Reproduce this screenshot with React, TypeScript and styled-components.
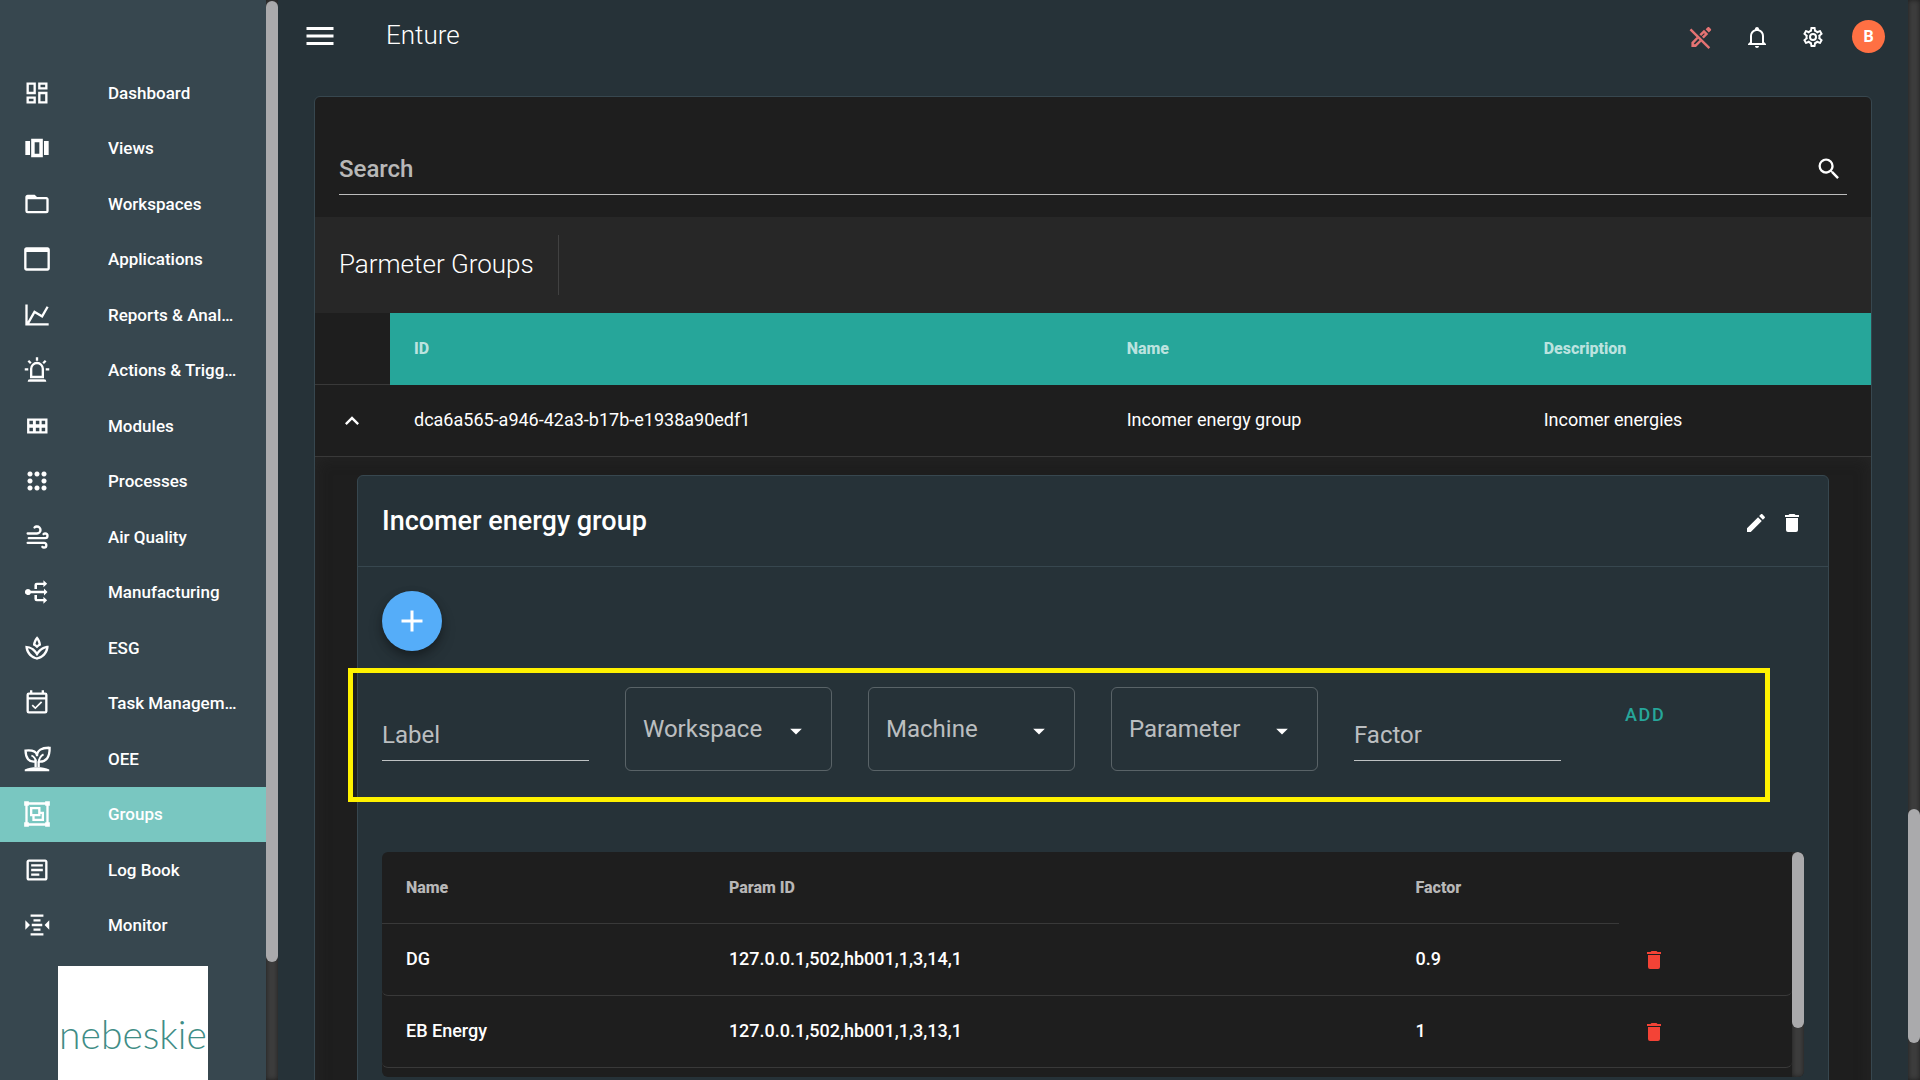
import React from "react";
import styled, { createGlobalStyle } from "styled-components";
import { MdOutlineSpa } from "react-icons/md";

const color = {
  page: "#263238",
  side: "#37474f",
  panel: "#1e1e1e",
  bar: "#272727",
  line: "#37474f",
  rule: "rgba(255, 255, 255, 0.12)",
  muted: "rgba(255, 255, 255, 0.7)",
  teal: "#26a69a",
};

const GlobalStyle = createGlobalStyle`
  *, *::before, *::after { box-sizing: border-box; }
  body {
    margin: 0;
    background: ${color.page};
    color: #fff;
    font-family: Roboto, "Liberation Sans", sans-serif;
    font-size: 18px;
  }
  button, input, select { font: inherit; color: inherit; }
  button { border: 0; padding: 0; background: none; cursor: pointer; }
`;

const paths = {
  dashboard: "M19,5V7H15V5H19M9,5V11H5V5H9M19,13V19H15V13H19M9,17V19H5V17H9M21,3H13V9H21V3M11,3H3V13H11V3M21,11H13V21H21V11M11,15H3V21H11V15Z",
  views: "M18,6V18H22V6M2,18H6V6H2M7,20H17V4H7M10,7H14V17H10V7Z",
  folder: "M20,18H4V8H20M20,6H12L10,4H4C2.89,4 2,4.89 2,6V18A2,2 0 0,0 4,20H20A2,2 0 0,0 22,18V8C22,6.89 21.1,6 20,6Z",
  application: "M21 2H3C1.9 2 1 2.9 1 4V20C1 21.1 1.9 22 3 22H21C22.1 22 23 21.1 23 20V4C23 2.9 22.1 2 21 2M21 20H3V6H21V20Z",
  chart: "M16,11.78L20.24,4.45L21.97,5.45L16.74,14.5L10.23,10.75L5.46,19H22V21H2V3H4V17.54L9.5,8L16,11.78Z",
  alarm: "M6,6.9L3.87,4.78L5.28,3.37L7.4,5.5L6,6.9M13,1V4H11V1H13M20.13,4.78L18,6.9L16.6,5.5L18.72,3.37L20.13,4.78M4.5,10.5V12.5H1.5V10.5H4.5M19.5,10.5H22.5V12.5H19.5V10.5M6,20H18A2,2 0 0,1 20,22H4A2,2 0 0,1 6,20M12,5A6,6 0 0,1 18,11V19H6V11A6,6 0 0,1 12,5M12,7A4,4 0 0,0 8,11V17H16V11A4,4 0 0,0 12,7Z",
  modules: "M3.5,5.5V18.5H21V5.5H3.5M14,7.5V10.5H11V7.5H14M5.5,7.5H8.5V10.5H5.5V7.5M5.5,16.5V13.5H8.5V16.5H5.5M11,16.5V13.5H14V16.5H11M19,16.5H16V13.5H19V16.5M16,10.5V7.5H19V10.5H16Z",
  processes: "M6,3.8a2.2,2.2 0 1,0 .01,0M12,3.8a2.2,2.2 0 1,0 .01,0M18,3.8a2.2,2.2 0 1,0 .01,0M6,9.8a2.2,2.2 0 1,0 .01,0M18,9.8a2.2,2.2 0 1,0 .01,0M6,15.8a2.2,2.2 0 1,0 .01,0M12,15.8a2.2,2.2 0 1,0 .01,0M18,15.8a2.2,2.2 0 1,0 .01,0",
  wind: "M4,10A1,1 0 0,1 3,9A1,1 0 0,1 4,8H12A2,2 0 0,0 14,6A2,2 0 0,0 12,4C11.45,4 10.95,4.22 10.59,4.59C10.2,5 9.56,5 9.17,4.59C8.78,4.2 8.78,3.56 9.17,3.17C9.9,2.45 10.9,2 12,2A4,4 0 0,1 16,6A4,4 0 0,1 12,10H4M19,12A1,1 0 0,0 20,11A1,1 0 0,0 19,10C18.72,10 18.47,10.11 18.29,10.29C17.9,10.68 17.27,10.68 16.88,10.29C16.5,9.9 16.5,9.27 16.88,8.88C17.42,8.34 18.17,8 19,8A3,3 0 0,1 22,11A3,3 0 0,1 19,14H5A1,1 0 0,1 4,13A1,1 0 0,1 5,12H19M18,18H4A1,1 0 0,1 3,17A1,1 0 0,1 4,16H18A3,3 0 0,1 21,19A3,3 0 0,1 18,22C17.17,22 16.42,21.66 15.88,21.12C15.5,20.73 15.5,20.1 15.88,19.71C16.27,19.32 16.9,19.32 17.29,19.71C17.47,19.89 17.72,20 18,20A1,1 0 0,0 19,19A1,1 0 0,0 18,18Z",
  manufacturing: "M4.3,9.4A2.6,2.6 0 0,1 6.7,11H18V9L21,12L18,15V13H6.7A2.6,2.6 0 1,1 4.3,9.4M9.8,9.5V6A2,2 0 0,1 11.8,4H17.5V2L20.7,5L17.5,8V6H12V9.5H9.8M9.8,14.5H12V18H17.5V16L20.7,19L17.5,22V20H11.8A2,2 0 0,1 9.8,18V14.5Z",
  calendar: "M19,3H18V1H16V3H8V1H6V3H5A2,2 0 0,0 3,5V19A2,2 0 0,0 5,21H19A2,2 0 0,0 21,19V5A2,2 0 0,0 19,3M19,19H5V9H19V19M5,7V5H19V7H5M10.56,17.46L16.5,11.53L15.43,10.47L10.56,15.34L8.45,13.23L7.39,14.29L10.56,17.46Z",
  group: "M8,8V12H13V8H8M1,1H5V2H19V1H23V5H22V19H23V23H19V22H5V23H1V19H2V5H1V1M5,19V20H19V19H20V5H19V4H5V5H4V19H5M6,6H15V10H18V18H8V14H6V6M15,14H10V16H16V12H15V14Z",
  log: "M5,3C3.89,3 3,3.89 3,5V19C3,20.11 3.89,21 5,21H19C20.11,21 21,20.11 21,19V5C21,3.89 20.11,3 19,3H5M5,5H19V19H5V5M7,7V9H17V7H7M7,11V13H17V11H7M7,15V17H14V15H7Z",
  monitor: "M2,8V16L6,12L2,8M22.5,8V16L18.5,12L22.5,8M6.5,3H17.5V5H6.5V3M9,7H15V9H9V7M7.5,11H16.5V13H7.5V11M9,15H15V17H9V15M6.5,19H17.5V21H6.5V19Z",
  bell: "M10 21H14C14 22.1 13.1 23 12 23S10 22.1 10 21M21 19V20H3V19L5 17V11C5 7.9 7 5.2 10 4.3V4C10 2.9 10.9 2 12 2S14 2.9 14 4V4.3C17 5.2 19 7.9 19 11V17L21 19M17 11C17 8.2 14.8 6 12 6S7 8.2 7 11V18H17V11Z",
  cog: "M12,8A4,4 0 0,1 16,12A4,4 0 0,1 12,16A4,4 0 0,1 8,12A4,4 0 0,1 12,8M12,10A2,2 0 0,0 10,12A2,2 0 0,0 12,14A2,2 0 0,0 14,12A2,2 0 0,0 12,10M10,22C9.75,22 9.54,21.82 9.5,21.58L9.13,18.93C8.5,18.68 7.96,18.34 7.44,17.94L4.95,18.95C4.73,19.03 4.46,18.95 4.34,18.73L2.34,15.27C2.21,15.05 2.27,14.78 2.46,14.63L4.57,12.97L4.5,12L4.57,11L2.46,9.37C2.27,9.22 2.21,8.95 2.34,8.73L4.34,5.27C4.46,5.05 4.73,4.96 4.95,5.05L7.44,6.05C7.96,5.66 8.5,5.32 9.13,5.07L9.5,2.42C9.54,2.18 9.75,2 10,2H14C14.25,2 14.46,2.18 14.5,2.42L14.87,5.07C15.5,5.32 16.04,5.66 16.56,6.05L19.05,5.05C19.27,4.96 19.54,5.05 19.66,5.27L21.66,8.73C21.79,8.95 21.73,9.22 21.54,9.37L19.43,11L19.5,12L19.43,13L21.54,14.63C21.73,14.78 21.79,15.05 21.66,15.27L19.66,18.73C19.54,18.95 19.27,19.04 19.05,18.95L16.56,17.95C16.04,18.34 15.5,18.68 14.87,18.93L14.5,21.58C14.46,21.82 14.25,22 14,22H10M11.25,4L10.88,6.61C9.68,6.86 8.62,7.5 7.85,8.39L5.44,7.35L4.69,8.65L6.8,10.2C6.4,11.37 6.4,12.64 6.8,13.8L4.68,15.36L5.43,16.66L7.86,15.62C8.63,16.5 9.68,17.14 10.87,17.38L11.24,20H12.76L13.13,17.39C14.32,17.14 15.37,16.5 16.14,15.62L18.57,16.66L19.32,15.36L17.2,13.81C17.6,12.64 17.6,11.37 17.2,10.2L19.31,8.65L18.56,7.35L16.15,8.39C15.38,7.5 14.32,6.86 13.12,6.62L12.75,4H11.25Z",
  magnify: "M9.5,3A6.5,6.5 0 0,1 16,9.5C16,11.11 15.41,12.59 14.44,13.73L14.71,14H15.5L20.5,19L19,20.5L14,15.5V14.71L13.73,14.44C12.59,15.41 11.11,16 9.5,16A6.5,6.5 0 0,1 3,9.5A6.5,6.5 0 0,1 9.5,3M9.5,5C7,5 5,7 5,9.5C5,12 7,14 9.5,14C12,14 14,12 14,9.5C14,7 12,5 9.5,5Z",
  pencil: "M20.71,7.04C21.1,6.65 21.1,6 20.71,5.63L18.37,3.29C18,2.9 17.35,2.9 16.96,3.29L15.12,5.12L18.87,8.87M3,17.25V21H6.75L17.81,9.93L14.06,6.18L3,17.25Z",
  trash: "M19,4H15.5L14.5,3H9.5L8.5,4H5V6H19M6,19A2,2 0 0,0 8,21H16A2,2 0 0,0 18,19V7H6V19Z",
  plus: "M19,13H13V19H11V13H5V11H11V5H13V11H19V13Z",
  chevronUp: "M7.41,15.41L12,10.83L16.59,15.41L18,14L12,8L6,14L7.41,15.41Z",
  menuDown: "M7,10L12,15L17,10H7Z",
  menu: "M3,6H21V8H3V6M3,11H21V13H3V11M3,16H21V18H3V16Z",
};

type IconName = keyof typeof paths;

const Svg = styled.svg<{ $size: number }>`
  display: block;
  flex: none;
  width: ${(p) => p.$size}px;
  height: ${(p) => p.$size}px;
  fill: currentColor;
`;

const Icon = ({ name, size = 24 }: { name: IconName; size?: number }) => (
  <Svg $size={size} viewBox="0 0 24 24" aria-hidden="true">
    <path d={paths[name]} />
  </Svg>
);

const SproutIcon = () => (
  <Svg $size={28} viewBox="0 0 24 24" aria-hidden="true">
    <path d="M1.5,22.5V21C4,19.4 8,19 12,19S20,19.4 22.5,21V22.5Z" />
    <g fill="none" stroke="currentColor" strokeWidth="2">
      <path d="M10.8,19V12.5M13.4,19V14" />
      <path d="M10.4,14.2C5.2,15 2.2,11.2 2.2,4.8C7,4.3 11,4.8 12,8.6" />
      <path d="M13.6,14.2C19.8,14.6 23,10.6 22.8,2.4C16,2.2 12,4.4 12,9.6" />
      <path d="M10.8,13.5C10.6,11.6 9.4,10 7.2,9M13.4,15C13.6,12 14.8,9.6 17.6,8" strokeWidth="1.6" />
    </g>
  </Svg>
);

const PencilOffIcon = () => (
  <Svg $size={24} viewBox="0 0 24 24" aria-hidden="true">
    <path d="M21.9,5.4C22.3,5 22.3,4.3 21.9,3.9L20.2,2.2C19.8,1.8 19.1,1.8 18.7,2.2L16.6,4.3L19.8,7.5Z" />
    <path d="M2.4,17.2V22H7L12.4,16.6L10.7,14.9L5.9,19.6L4.8,18.4L9.4,13.6L7.7,11.9Z" />
    <path d="M10.4,9.3L15,4.8L19.2,9L14.7,13.6L12.9,11.8L15.8,9L15,8.2L12.2,11.1Z" />
    <path d="M.6,5.2L2.3,3.5L21.2,22.3L19.5,24Z" />
  </Svg>
);

const Shell = styled.div`
  display: flex;
  height: 100vh;
  overflow: hidden;
`;

const Sidebar = styled.aside`
  flex: none;
  width: 266px;
  padding-top: 65px;
  overflow: hidden;
  background: ${color.side};
`;

const NavList = styled.nav`
  display: grid;
  grid-template-columns: minmax(0, 1fr);
  grid-auto-rows: 1fr;
  height: 888px;
`;

const NavLink = styled.a<{ $active?: boolean }>`
  display: flex;
  align-items: center;
  gap: 57px;
  padding: 0 28px 0 23px;
  color: #fff;
  font-size: 17px;
  font-weight: 500;
  text-decoration: none;
  background: ${(p) => (p.$active ? "#79c7c1" : "transparent")};
`;

const NavLabel = styled.span`
  flex: 1;
  min-width: 0;
  overflow: hidden;
  white-space: nowrap;
  text-overflow: ellipsis;
`;

const Brand = styled.div`
  display: flex;
  align-items: center;
  justify-content: center;
  width: 150px;
  height: 150px;
  margin: 13px auto 0 58px;
  padding-bottom: 14px;
  background: #fff;
  color: #3f8d86;
  font-family: Lato, Roboto, sans-serif;
  font-size: 39px;
  font-weight: 300;
`;

const Rail = styled.div<{ $before: number; $thumb: number; $after: number }>`
  display: grid;
  flex: none;
  grid-template-rows: ${(p) => `${p.$before}fr ${p.$thumb}fr ${p.$after}fr`};
  width: 12px;
  background: #3d3d3d;
  box-shadow: inset 0 0 5px #1e1e1e;
`;

const Thumb = styled.div`
  grid-row: 2;
  border-radius: 6px;
  background: #aaaaac;
`;

const ScrollRail = ({ before, thumb, after }: { before: number; thumb: number; after: number }) => (
  <Rail $before={before} $thumb={thumb} $after={after} aria-hidden="true">
    <Thumb />
  </Rail>
);

const Main = styled.main`
  flex: 1;
  min-width: 0;
  overflow: hidden;
`;

const TopBar = styled.header`
  display: flex;
  align-items: center;
  height: 72px;
  padding: 0 11px 0 24px;
`;

const AppTitle = styled.h1`
  flex: 1;
  margin: 0 0 0 48px;
  padding-bottom: 2px;
  font-size: 26px;
  font-weight: 300;
`;

const BarButton = styled.button<{ $tone?: string }>`
  display: grid;
  place-items: center;
  width: 56px;
  height: 56px;
  padding-top: 2px;
  color: ${(p) => p.$tone ?? "#fff"};
`;

const AccountButton = styled(BarButton)`
  padding: 0 1px 0 0;
`;

const MenuButton = styled.button`
  display: grid;
  place-items: center;
  width: 36px;
  height: 36px;
`;

const Avatar = styled.span`
  display: grid;
  place-items: center;
  width: 33px;
  height: 33px;
  border-radius: 50%;
  background: #ff7043;
  font-size: 16px;
  font-weight: 700;
`;

const Panel = styled.section`
  margin: 24px 36px;
  border: 1px solid ${color.line};
  border-radius: 6px;
  background: ${color.panel};
`;

const SearchArea = styled.div`
  padding: 46px 24px 22px;
`;

const SearchField = styled.label`
  display: flex;
  align-items: center;
  height: 52px;
  padding-right: 4px;
  border-bottom: 1px solid ${color.muted};
`;

const SearchInput = styled.input`
  flex: 1;
  min-width: 0;
  padding: 0;
  border: 0;
  outline: 0;
  background: none;
  font-size: 24px;
  font-weight: 500;
  &::placeholder { color: ${color.muted}; opacity: 1; }
`;

const Toolbar = styled.div`
  display: flex;
  align-items: center;
  height: 96px;
  padding: 0 24px;
  background: ${color.bar};
`;

const ToolbarTitle = styled.h2`
  margin: 0;
  padding: 0 24px 2px 0;
  border-right: 1px solid ${color.rule};
  font-size: 26px;
  font-weight: 300;
  line-height: 58px;
`;

const Table = styled.table`
  width: 100%;
  table-layout: fixed;
  border-collapse: separate;
  border-spacing: 0;
  text-align: left;
`;

const Col = styled.col<{ $width?: string }>`
  width: ${(p) => p.$width ?? "auto"};
`;

const HeadCell = styled.th<{ $fill?: string; $plain?: boolean }>`
  height: 72px;
  padding: 0 24px 1px;
  border-bottom: 1px solid ${(p) => (p.$plain ? "transparent" : p.$fill ?? color.rule)};
  background: ${(p) => p.$fill ?? "transparent"};
  color: ${color.muted};
  font-size: 16px;
  font-weight: 800;
`;

const Cell = styled.td`
  height: 72px;
  padding: 0 24px 2px;
  border-bottom: 1px solid ${color.rule};
`;

const ActionCell = styled(Cell)`
  padding: 1px 23px 0;
`;

const GroupRow = styled.tr`
  font-weight: 400;
`;

const ParamRow = styled.tr`
  font-weight: 500;
  td:first-child { border-bottom-left-radius: 6px; }
  td:last-child { border-bottom-right-radius: 6px; }
`;

const ExpandedCell = styled.td`
  padding: 18px 42px 24px;
  box-shadow: inset 0 0 16px rgba(50, 50, 50, 0.4);
`;

const Card = styled.article`
  border: 1px solid ${color.line};
  border-radius: 6px;
  background: ${color.page};
`;

const CardHeader = styled.div`
  display: flex;
  align-items: center;
  gap: 12px;
  height: 91px;
  padding: 4px 24px 0;
  border-bottom: 1px solid ${color.line};
`;

const CardTitle = styled.h3`
  flex: 1;
  margin: 0;
  padding-bottom: 4px;
  font-size: 27px;
  font-weight: 500;
`;

const CardBody = styled.div`
  padding: 24px;
`;

const AddFab = styled.button`
  display: grid;
  place-items: center;
  width: 60px;
  height: 60px;
  border-radius: 50%;
  background: #55adf9;
  box-shadow: 0 4px 8px rgba(0, 0, 0, 0.3), 0 8px 16px rgba(0, 0, 0, 0.14);
`;

const ParamForm = styled.form`
  position: relative;
  display: grid;
  grid-template-columns: repeat(6, minmax(0, 1fr));
  gap: 36px;
  align-items: start;
  margin: 36px 0 81px;
`;

const Highlight = styled.div`
  position: absolute;
  inset: -19px 34px -31px -34px;
  border: 5px solid #fff200;
  pointer-events: none;
`;

const TextInput = styled.input`
  width: 100%;
  height: 52px;
  margin-top: 22px;
  padding: 0;
  border: 0;
  border-bottom: 1px solid ${color.muted};
  outline: 0;
  background: none;
  font-size: 24px;
  &::placeholder { color: ${color.muted}; opacity: 1; }
`;

const SelectBox = styled.div`
  position: relative;
`;

const Select = styled.select`
  appearance: none;
  width: 100%;
  height: 84px;
  padding: 0 48px 0 17px;
  border: 1px solid rgba(255, 255, 255, 0.24);
  border-radius: 6px;
  outline: 0;
  background: none;
  color: ${color.muted};
  font-size: 24px;
`;

const SelectArrow = styled.span`
  position: absolute;
  top: 30px;
  right: 22px;
  pointer-events: none;
`;

const AddButton = styled.button`
  justify-self: start;
  height: 54px;
  padding: 0 28px;
  color: ${color.teal};
  font-size: 18px;
  font-weight: 500;
  letter-spacing: 0.09em;
`;

const ParamPane = styled.div`
  display: flex;
  height: 225px;
  overflow: hidden;
  border-radius: 6px;
  background: ${color.panel};
`;

const ParamScroll = styled.div`
  flex: 1;
  min-width: 0;
`;

const IconButton = styled.button<{ $danger?: boolean }>`
  display: block;
  color: ${(p) => (p.$danger ? "#f44336" : "#fff")};
`;

const nav: { label: string; icon: React.ReactNode; active?: boolean }[] = [
  { label: "Dashboard", icon: <Icon name="dashboard" size={28} /> },
  { label: "Views", icon: <Icon name="views" size={28} /> },
  { label: "Workspaces", icon: <Icon name="folder" size={28} /> },
  { label: "Applications", icon: <Icon name="application" size={28} /> },
  { label: "Reports & Analytics", icon: <Icon name="chart" size={28} /> },
  { label: "Actions & Triggers", icon: <Icon name="alarm" size={28} /> },
  { label: "Modules", icon: <Icon name="modules" size={28} /> },
  { label: "Processes", icon: <Icon name="processes" size={28} /> },
  { label: "Air Quality", icon: <Icon name="wind" size={28} /> },
  { label: "Manufacturing", icon: <Icon name="manufacturing" size={28} /> },
  { label: "ESG", icon: <MdOutlineSpa size={28} /> },
  { label: "Task Management", icon: <Icon name="calendar" size={28} /> },
  { label: "OEE", icon: <SproutIcon /> },
  { label: "Groups", icon: <Icon name="group" size={28} />, active: true },
  { label: "Log Book", icon: <Icon name="log" size={28} /> },
  { label: "Monitor", icon: <Icon name="monitor" size={28} /> },
];

const params = [
  { name: "DG", id: "127.0.0.1,502,hb001,1,3,14,1", factor: "0.9" },
  { name: "EB Energy", id: "127.0.0.1,502,hb001,1,3,13,1", factor: "1" },
];

const Picker = ({ label }: { label: string }) => (
  <SelectBox>
    <Select aria-label={label}>
      <option>{label}</option>
    </Select>
    <SelectArrow>
      <Icon name="menuDown" size={28} />
    </SelectArrow>
  </SelectBox>
);

export default function App() {
  return (
    <>
      <GlobalStyle />
      <Shell>
        <Sidebar>
          <NavList>
            {nav.map((item) => (
              <NavLink key={item.label} href="#" $active={item.active}>
                {item.icon}
                <NavLabel>{item.label}</NavLabel>
              </NavLink>
            ))}
          </NavList>
          <Brand>nebeskie</Brand>
        </Sidebar>
        <ScrollRail before={1} thumb={961} after={118} />
        <Main>
          <TopBar>
            <MenuButton aria-label="Menu">
              <Icon name="menu" size={36} />
            </MenuButton>
            <AppTitle>Enture</AppTitle>
            <BarButton aria-label="Editing off" $tone="#e57373">
              <PencilOffIcon />
            </BarButton>
            <BarButton aria-label="Notifications">
              <Icon name="bell" />
            </BarButton>
            <BarButton aria-label="Settings">
              <Icon name="cog" />
            </BarButton>
            <AccountButton aria-label="Account">
              <Avatar>B</Avatar>
            </AccountButton>
          </TopBar>
          <Panel>
            <SearchArea>
              <SearchField>
                <SearchInput type="text" placeholder="Search" aria-label="Search" />
                <Icon name="magnify" size={28} />
              </SearchField>
            </SearchArea>
            <Toolbar>
              <ToolbarTitle>Parmeter Groups</ToolbarTitle>
            </Toolbar>
            <Table>
              <colgroup>
                <Col $width="75px" />
                <Col $width="45.8%" />
                <Col $width="26.8%" />
                <Col />
              </colgroup>
              <thead>
                <tr>
                  <HeadCell aria-label="Expand" />
                  <HeadCell $fill={color.teal}>ID</HeadCell>
                  <HeadCell $fill={color.teal}>Name</HeadCell>
                  <HeadCell $fill={color.teal}>Description</HeadCell>
                </tr>
              </thead>
              <tbody>
                <GroupRow>
                  <ActionCell>
                    <IconButton aria-label="Collapse row">
                      <Icon name="chevronUp" size={28} />
                    </IconButton>
                  </ActionCell>
                  <Cell>dca6a565-a946-42a3-b17b-e1938a90edf1</Cell>
                  <Cell>Incomer energy group</Cell>
                  <Cell>Incomer energies</Cell>
                </GroupRow>
                <tr>
                  <ExpandedCell colSpan={4}>
                    <Card>
                      <CardHeader>
                        <CardTitle>Incomer energy group</CardTitle>
                        <IconButton aria-label="Edit group">
                          <Icon name="pencil" />
                        </IconButton>
                        <IconButton aria-label="Delete group">
                          <Icon name="trash" />
                        </IconButton>
                      </CardHeader>
                      <CardBody>
                        <AddFab aria-label="Add parameter">
                          <Icon name="plus" size={36} />
                        </AddFab>
                        <ParamForm onSubmit={(e) => e.preventDefault()}>
                          <TextInput placeholder="Label" aria-label="Label" />
                          <Picker label="Workspace" />
                          <Picker label="Machine" />
                          <Picker label="Parameter" />
                          <TextInput placeholder="Factor" aria-label="Factor" />
                          <AddButton type="submit">ADD</AddButton>
                          <Highlight />
                        </ParamForm>
                        <ParamPane>
                          <ParamScroll>
                            <Table>
                              <colgroup>
                                <Col $width="22.9%" />
                                <Col $width="48.7%" />
                                <Col $width="16.1%" />
                                <Col />
                              </colgroup>
                              <thead>
                                <tr>
                                  <HeadCell>Name</HeadCell>
                                  <HeadCell>Param ID</HeadCell>
                                  <HeadCell>Factor</HeadCell>
                                  <HeadCell $plain aria-label="Actions" />
                                </tr>
                              </thead>
                              <tbody>
                                {params.map((row) => (
                                  <ParamRow key={row.id}>
                                    <Cell>{row.name}</Cell>
                                    <Cell>{row.id}</Cell>
                                    <Cell>{row.factor}</Cell>
                                    <ActionCell>
                                      <IconButton $danger aria-label={`Delete ${row.name}`}>
                                        <Icon name="trash" />
                                      </IconButton>
                                    </ActionCell>
                                  </ParamRow>
                                ))}
                              </tbody>
                            </Table>
                          </ParamScroll>
                          <ScrollRail before={0} thumb={176} after={49} />
                        </ParamPane>
                      </CardBody>
                    </Card>
                  </ExpandedCell>
                </tr>
              </tbody>
            </Table>
          </Panel>
        </Main>
        <ScrollRail before={809} thumb={234} after={37} />
      </Shell>
    </>
  );
}
